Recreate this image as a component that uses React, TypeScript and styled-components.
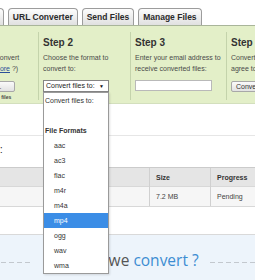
import React from "react";
import styled, { createGlobalStyle } from "styled-components";

const Global = createGlobalStyle`
  html, body { margin: 0; padding: 0; background: #ffffff; overflow: hidden; }
  body { font-family: "Liberation Sans", Arial, sans-serif; }
`;

const Page = styled.div`
  width: 380px;
  margin-left: -63px;
  font-family: "Liberation Sans", Arial, sans-serif;
  color: #333;
`;

const TabBar = styled.div`
  display: flex;
  align-items: flex-end;
  gap: 4px;
  height: 17px;
  padding: 8px 0 0 3px;
`;

const Tab = styled.div`
  box-sizing: border-box;
  height: 17px;
  padding: 0 4px;
  border: 1px solid #9c9c9c;
  border-bottom: none;
  border-radius: 4px 4px 0 0;
  background: linear-gradient(#fdfdfd, #e0e0e0);
  font-weight: bold;
  font-size: 8.5px;
  line-height: 16px;
  color: #2a2a2a;
  white-space: nowrap;
`;

const StepsPanel = styled.div`
  display: grid;
  grid-template-columns: 101px 92px 96px 1fr;
  background: #e3efc8;
  border-top: 1px solid #a9b59a;
  border-bottom: 1px solid #d3dfbd;
  padding: 6px 0 3px;
`;

const StepCol = styled.div<{ $first?: boolean }>`
  border-left: ${(p) => (p.$first ? "none" : "1px solid #c4d3ab")};
  padding: 5px 4px 0;
  min-width: 0;
  white-space: nowrap;
  overflow: visible;
`;

const StepTitle = styled.div`
  font-weight: bold;
  font-size: 10px;
  line-height: 12px;
  color: #333;
`;

const StepText = styled.div`
  margin-top: 4px;
  font-size: 7px;
  line-height: 10.5px;
  color: #4a4a4a;
`;

const MoreLink = styled.a`
  color: #2b4f9a;
  text-decoration: underline;
`;

const GrayButton = styled.div<{ $width?: number }>`
  box-sizing: border-box;
  margin-top: 7px;
  width: ${(p) => (p.$width ? `${p.$width}px` : "auto")};
  display: inline-block;
  height: 11px;
  padding: 0 4px;
  border: 1px solid #a8a8a8;
  border-radius: 2px;
  background: linear-gradient(#fafafa, #e2e2e2);
  font-size: 7px;
  line-height: 9px;
  color: #333;
  text-align: center;
`;

const DropHint = styled.div`
  margin-top: 1px;
  font-size: 5px;
  line-height: 6px;
  font-weight: bold;
  color: #444;
  padding-left: 30px;
`;

const SelectBox = styled.div`
  position: relative;
  box-sizing: border-box;
  margin-top: 6px;
  width: 66px;
  height: 12px;
  border: 1px solid #858585;
  background: #fff;
  font-size: 7px;
  line-height: 10px;
  padding-left: 2px;
  color: #222;
`;

const Arrow = styled.span`
  position: absolute;
  right: 4px;
  top: 0;
  font-size: 5px;
  line-height: 10px;
  color: #111;
`;

const DropList = styled.div`
  position: absolute;
  z-index: 10;
  top: 11px;
  left: -1px;
  width: 64px;
  border: 1px solid #9a9a9a;
  background: #fff;
  box-shadow: 1px 1px 2px rgba(0, 0, 0, 0.12);
`;

const DropItem = styled.div<{ $indent?: boolean; $bold?: boolean; $active?: boolean }>`
  height: 15px;
  line-height: 15px;
  font-size: 7px;
  padding-left: ${(p) => (p.$indent ? "10px" : "1px")};
  font-weight: ${(p) => (p.$bold ? "bold" : "normal")};
  background: ${(p) => (p.$active ? "#3b8de6" : "transparent")};
  color: ${(p) => (p.$active ? "#ffffff" : "#333")};
`;

const EmailInput = styled.div`
  box-sizing: border-box;
  margin-top: 6px;
  width: 77px;
  height: 11px;
  border: 1px solid #b9b9b9;
  background: #fff;
`;

const FilesArea = styled.div`
  padding: 31px 0 27px;
  background: #fff;
  border-bottom: 1px solid #d9d9d9;
`;

const FilesBox = styled.div`
  border-top: 1px solid #e6e6e6;
  padding-top: 7px;
`;

const FilesLabel = styled.div`
  font-size: 11px;
  line-height: 13px;
  color: #333;
  padding-left: 18px;
  margin-bottom: 11px;
`;

const TableRow = styled.div<{ $head?: boolean }>`
  box-sizing: border-box;
  display: grid;
  grid-template-columns: 212px 61px 1fr;
  height: 20px;
  background: ${(p) => (p.$head ? "#e5e5e5" : "#f6f6f6")};
  border-top: ${(p) => (p.$head ? "1px solid #cbcbcb" : "none")};
  border-bottom: 1px solid #d8d8d8;
  font-size: 7px;
  font-weight: ${(p) => (p.$head ? "bold" : "normal")};
  color: ${(p) => (p.$head ? "#333" : "#444")};
`;

const Cell = styled.div<{ $sep?: boolean }>`
  padding-left: 6px;
  line-height: 19px;
  border-left: ${(p) => (p.$sep ? "1px solid #d0d0d0" : "none")};
`;

const HowSection = styled.div`
  background: #edf4fb;
  padding-top: 16px;
  height: 60px;
`;

const HowRow = styled.div`
  display: flex;
  align-items: center;
`;

const Dash = styled.div<{ $width?: number }>`
  flex: ${(p) => (p.$width ? `0 0 ${p.$width}px` : "1")};
  height: 1px;
  margin-top: 4px;
  background: repeating-linear-gradient(90deg, #c3c8ce 0 5px, transparent 5px 8px);
`;

const HowTitle = styled.div`
  margin: 0 11px 0 19px;
  font-family: "Open Sans", "Liberation Sans", sans-serif;
  font-size: 15.5px;
  line-height: 18px;
  color: #555;
  white-space: nowrap;
`;

const Blue = styled.span`
  color: #3d8dd2;
`;

const formats = ["aac", "ac3", "flac", "m4r", "m4a", "mp4", "ogg", "wav", "wma"];

export default function App() {
  return (
    <Page>
      <Global />
      <TabBar>
        <Tab>Convert Files</Tab>
        <Tab>URL Converter</Tab>
        <Tab>Send Files</Tab>
        <Tab>Manage Files</Tab>
      </TabBar>
      <StepsPanel>
        <StepCol $first>
          <StepTitle>Step 1</StepTitle>
          <StepText>
            Select the files to convert
            <br />
            (Want to convert <MoreLink>more</MoreLink> ?)
          </StepText>
          <GrayButton $width={74}>Choose Files...</GrayButton>
          <DropHint>Drag &amp; drop files</DropHint>
        </StepCol>
        <StepCol>
          <StepTitle>Step 2</StepTitle>
          <StepText>
            Choose the format to
            <br />
            convert to:
          </StepText>
          <SelectBox>
            Convert files to:
            <Arrow>▼</Arrow>
            <DropList>
              <DropItem>Convert files to:</DropItem>
              <DropItem />
              <DropItem $bold>File Formats</DropItem>
              {formats.map((f) => (
                <DropItem key={f} $indent $active={f === "mp4"}>
                  {f}
                </DropItem>
              ))}
            </DropList>
          </SelectBox>
        </StepCol>
        <StepCol>
          <StepTitle>Step 3</StepTitle>
          <StepText>
            Enter your email address to
            <br />
            receive converted files:
          </StepText>
          <EmailInput />
        </StepCol>
        <StepCol>
          <StepTitle>Step 4</StepTitle>
          <StepText>
            Convert files, you
            <br />
            agree to our terms
          </StepText>
          <GrayButton>Convert</GrayButton>
        </StepCol>
      </StepsPanel>
      <FilesArea>
        <FilesBox>
          <FilesLabel>Your files:</FilesLabel>
          <TableRow $head>
            <Cell>File Name</Cell>
            <Cell $sep>Size</Cell>
            <Cell $sep>Progress</Cell>
          </TableRow>
          <TableRow>
            <Cell>song.mp3</Cell>
            <Cell $sep>7.2 MB</Cell>
            <Cell $sep>Pending</Cell>
          </TableRow>
        </FilesBox>
      </FilesArea>
      <HowSection>
        <HowRow>
          <Dash $width={93} />
          <HowTitle>
            How do we <Blue>convert ?</Blue>
          </HowTitle>
          <Dash />
        </HowRow>
      </HowSection>
    </Page>
  );
}
